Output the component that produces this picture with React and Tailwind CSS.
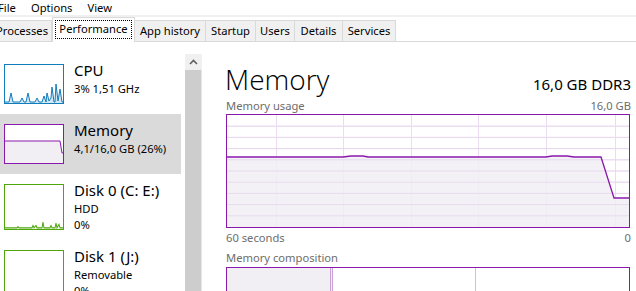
import React from "react";

const tabs = [
  { label: "Processes", w: "w-[60px]" },
  { label: "Performance", w: "w-[83px]", active: true },
  { label: "App history", w: "w-[72px]" },
  { label: "Startup", w: "w-[51px]" },
  { label: "Users", w: "w-[40px]" },
  { label: "Details", w: "w-[49px]" },
  { label: "Services", w: "w-[54px]" },
];

const Thumb = ({ color, className, children }) => (
  <div className={`w-[60px] shrink-0 border bg-white ${className}`} style={{ borderColor: color }}>
    <svg viewBox="0 0 58 38" preserveAspectRatio="none" className="w-full h-full block">
      {children}
    </svg>
  </div>
);

const SideItem = ({ title, lines, thumb, selected, h }) => (
  <div className={`flex ${h} pl-[4px] py-[10px] ${selected ? "bg-[#dadada]" : ""}`}>
    {thumb}
    <div className="ml-[10px] -mt-[4px] text-[#000] whitespace-nowrap">
      <div className="text-[15px] leading-[21px]">{title}</div>
      {lines.map((l) => (
        <div key={l} className="text-[11.2px] leading-[16px]">
          {l}
        </div>
      ))}
    </div>
  </div>
);

const App = () => {
  const vLines = [49, 116, 184, 251, 319, 388];
  const hLines = [1, 2, 3, 4, 5, 6, 7, 8, 9].map((i) => i * 11.2);
  const line =
    "0,42 116,42 124,41 136,41 141,42 319,42 325,41 340,41 347,42 374,42 387,83 402,83";

  return (
    <div className="w-[636px] h-[291px] overflow-hidden bg-white text-[#000] font-['Noto_Sans',sans-serif] text-[11.2px]">
      {/* menu */}
      <div className="h-[15px] flex items-center gap-[15px] -ml-[2px] leading-[15px]">
        <span>File</span>
        <span>Options</span>
        <span>View</span>
      </div>
      <div className="h-[2px] bg-[#f0f0f0]" />

      {/* tabs */}
      <div className="h-[25px] flex items-end -ml-[7px] border-b border-[#d9d9d9]">
        {tabs.map((t) =>
          t.active ? (
            <div
              key={t.label}
              className={`${t.w} h-[25px] -mb-px bg-white border border-b-0 border-[#d9d9d9] p-[2px] relative z-10`}
            >
              <div className="h-[19px] border border-dotted border-black flex items-center justify-center">
                {t.label}
              </div>
            </div>
          ) : (
            <div
              key={t.label}
              className={`${t.w} h-[21px] bg-[#f0f0f0] border border-b-0 border-[#d9d9d9] -ml-px flex items-center justify-center`}
            >
              {t.label}
            </div>
          )
        )}
      </div>

      <div className="flex">
        {/* left pane */}
        <div className="w-[202px] shrink-0 flex">
          <div className="w-[181px] pt-[12px]">
            <SideItem
              title="CPU"
              lines={["3% 1,51 GHz"]}
              h="h-[60px]"
              thumb={
                <Thumb color="#117dbb" className="h-[40px]">
                  <polygon
                    fill="#d3e6f3"
                    points="0,38 0,37 4,37 6,28 8,37 15,37 17,33 19,37 21,37 23,28 25,37 30,37 32,33 34,37 37,37 39,31 41,37 42,28 44,36 46,33 47,22 49,37 50,37 51,19 53,36 55,24 57,37 58,37 58,38"
                  />
                  <polyline
                    fill="none"
                    stroke="#117dbb"
                    strokeWidth="1"
                    points="0,37 4,37 6,28 8,37 15,37 17,33 19,37 21,37 23,28 25,37 30,37 32,33 34,37 37,37 39,31 41,37 42,28 44,36 46,33 47,22 49,37 50,37 51,19 53,36 55,24 57,37 58,37"
                  />
                </Thumb>
              }
            />
            <SideItem
              title="Memory"
              lines={["4,1/16,0 GB (26%)"]}
              selected
              h="h-[60px]"
              thumb={
                <Thumb color="#8b18ad" className="h-[40px]">
                  <polygon fill="#f1eff4" points="0,16 55,16 57,28 58,28 58,38 0,38" />
                  <polyline fill="none" stroke="#8b18ad" strokeWidth="1" points="0,16 55,16 57,28 58,28" />
                </Thumb>
              }
            />
            <SideItem
              title="Disk 0 (C: E:)"
              lines={["HDD", "0%"]}
              h="h-[66px]"
              thumb={
                <Thumb color="#4da60c" className="h-[46px]">
                  <polyline
                    fill="none"
                    stroke="#4da60c"
                    strokeWidth="1"
                    points="0,37 12,37 13,36 14,37 27,37 28,35 29,37 31,35 32,37 37,37 38,32 39,37 45,37 46,35 47,37 50,37 51,33 52,37 54,34 55,37 58,37"
                  />
                </Thumb>
              }
            />
            <SideItem
              title="Disk 1 (J:)"
              lines={["Removable", "0%"]}
              h="h-[66px]"
              thumb={<Thumb color="#4da60c" className="h-[46px]" />}
            />
          </div>
          <div className="w-[4px]" />
          {/* scrollbar */}
          <div className="w-[17px] pt-[12px] flex flex-col">
            <div className="h-[16px] bg-[#f0f0f0] flex items-center justify-center">
              <svg width="9" height="6" viewBox="0 0 9 6">
                <polyline points="1,5 4.5,1.5 8,5" fill="none" stroke="#606060" strokeWidth="1.6" />
              </svg>
            </div>
            <div className="flex-1 flex">
              <div className="w-[16px] h-[300px] bg-[#cdcdcd]" />
              <div className="w-[1px] bg-[#e6e6e6]" />
            </div>
          </div>
        </div>

        {/* right pane */}
        <div className="ml-[24px] w-[404px] shrink-0 pt-[14px]">
          <div className="flex items-end justify-between h-[40px]">
            <div className="font-['Open_Sans',sans-serif] font-light text-[28px] leading-[36px] -ml-[1px] -mb-[1px]">
              Memory
            </div>
            <div className="text-[15px] leading-[22px] -mr-[1px] mb-[1px]">16,0 GB DDR3</div>
          </div>
          <div className="flex justify-between text-[#6d6d6d] leading-[16px] mt-[2px]">
            <span>Memory usage</span>
            <span className="-mr-[1px]">16,0 GB</span>
          </div>
          <div className="h-[114px] border border-[#8b18ad]">
            <svg viewBox="0 0 402 112" width="402" height="112" className="block">
              {hLines.map((y) => (
                <line key={y} x1="0" x2="402" y1={y} y2={y} stroke="#ecdcf2" strokeWidth="1" />
              ))}
              {vLines.map((x) => (
                <line key={x} x1={x + 0.5} x2={x + 0.5} y1="0" y2="112" stroke="#ecdcf2" strokeWidth="1" />
              ))}
              <polygon points={`${line} 402,112 0,112`} fill="#f1eff4" fillOpacity="0.85" />
              {hLines.map((y) => (
                <line key={"b" + y} x1="0" x2="402" y1={y} y2={y} stroke="#e6d7ee" strokeWidth="1" opacity="0.7" />
              ))}
              <polyline points={line} fill="none" stroke="#8b18ad" strokeWidth="1.3" />
            </svg>
          </div>
          <div className="flex justify-between text-[#6d6d6d] leading-[16px] mt-[2px]">
            <span>60 seconds</span>
            <span className="-mr-[1px]">0</span>
          </div>
          <div className="text-[#6d6d6d] leading-[16px] mt-[4px]">Memory composition</div>
          <div className="h-[40px] mt-[1px] border border-[#8b18ad] flex">
            <div className="w-[103px] bg-[#f1eff4]" />
            <div className="w-[1px] bg-[#c9a3d8]" />
            <div className="w-[1px] bg-[#f1eff4]" />
            <div className="w-[1px] bg-[#c9a3d8]" />
            <div className="w-[142px]" />
            <div className="w-[1px] bg-[#d7b9e2]" />
          </div>
        </div>
      </div>
    </div>
  );
};

export default App;
